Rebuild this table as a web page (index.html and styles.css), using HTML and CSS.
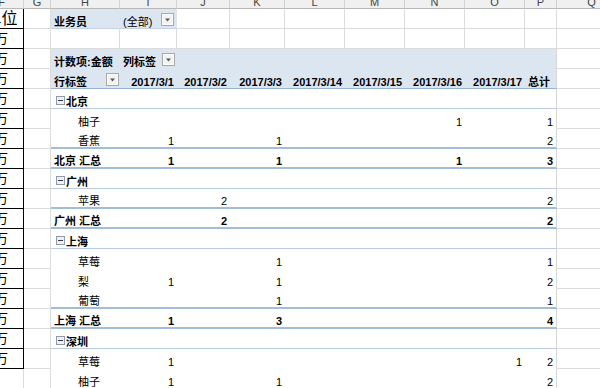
FILE: index.html
```html
<!DOCTYPE html>
<html lang="zh">
<head>
<meta charset="utf-8">
<title>数据透视表</title>
<link rel="stylesheet" href="styles.css">
</head>
<body>
<div class="sheet">
  <div class="row hd">
    <div class="h">F</div><div class="h">G</div><div class="h">H</div><div class="h">I</div><div class="h">J</div><div class="h">K</div><div class="h">L</div><div class="h">M</div><div class="h">N</div><div class="h">O</div><div class="h">P</div><div class="h">Q</div>
  </div>

  <div class="row">
    <div class="c f top">单位</div><div class="c"></div>
    <div class="c fl b">业务员</div>
    <div class="c fl sp">(全部)<svg class="dd" width="13" height="13" viewBox="0 0 13 13"><rect x="0.5" y="0.5" width="12" height="12" fill="#f3f3f3" stroke="#a8a8a8"/><rect x="1.5" y="1.5" width="10" height="10" fill="none" stroke="#fdfdfd"/><path d="M4 5.5h5l-2.5 3z" fill="#595959"/></svg></div>
    <div class="c"></div><div class="c"></div><div class="c"></div><div class="c"></div><div class="c"></div><div class="c"></div><div class="c"></div>
    <div class="c"></div>
  </div>

  <div class="row">
    <div class="c f">万</div><div class="c"></div>
    <div class="c"></div><div class="c"></div><div class="c"></div><div class="c"></div><div class="c"></div><div class="c"></div><div class="c"></div><div class="c"></div><div class="c"></div>
    <div class="c"></div>
  </div>

  <div class="row">
    <div class="c f">万</div><div class="c"></div>
    <div class="c ph b">计数项:金额</div>
    <div class="c ph b sp">列标签<svg class="dd" width="13" height="13" viewBox="0 0 13 13"><rect x="0.5" y="0.5" width="12" height="12" fill="#f3f3f3" stroke="#a8a8a8"/><rect x="1.5" y="1.5" width="10" height="10" fill="none" stroke="#fdfdfd"/><path d="M4 5.5h5l-2.5 3z" fill="#595959"/></svg></div>
    <div class="c ph"></div><div class="c ph"></div><div class="c ph"></div><div class="c ph"></div><div class="c ph"></div><div class="c ph"></div><div class="c ph pl"></div>
    <div class="c"></div>
  </div>

  <div class="row ln-hd">
    <div class="c f">万</div><div class="c"></div>
    <div class="c ph b sp sp1">行标签<svg class="dd" width="13" height="13" viewBox="0 0 13 13"><rect x="0.5" y="0.5" width="12" height="12" fill="#f3f3f3" stroke="#a8a8a8"/><rect x="1.5" y="1.5" width="10" height="10" fill="none" stroke="#fdfdfd"/><path d="M4 5.5h5l-2.5 3z" fill="#595959"/></svg></div>
    <div class="c ph b n">2017/3/1</div><div class="c ph b n">2017/3/2</div><div class="c ph b n">2017/3/3</div><div class="c ph b n">2017/3/14</div><div class="c ph b n">2017/3/15</div><div class="c ph b n">2017/3/16</div><div class="c ph b n">2017/3/17</div>
    <div class="c ph b pl">总计</div>
    <div class="c"></div>
  </div>

  <div class="row ln-g">
    <div class="c f">万</div><div class="c"></div>
    <div class="c pb b"><svg class="tg" width="9" height="9" viewBox="0 0 9 9"><rect x="0.5" y="0.5" width="8" height="8" fill="#eef1f4" stroke="#8f9baa"/><path d="M2 4.5h5" stroke="#3a3a3a"/></svg>北京</div>
    <div class="c pb"></div><div class="c pb"></div><div class="c pb"></div><div class="c pb"></div><div class="c pb"></div><div class="c pb"></div><div class="c pb"></div>
    <div class="c pb pl"></div>
    <div class="c"></div>
  </div>

  <div class="row">
    <div class="c f">万</div><div class="c"></div>
    <div class="c pb ch">柚子</div>
    <div class="c pb"></div><div class="c pb"></div><div class="c pb"></div><div class="c pb"></div><div class="c pb"></div><div class="c pb n">1</div><div class="c pb"></div>
    <div class="c pb pl n">1</div>
    <div class="c"></div>
  </div>

  <div class="row ln-s">
    <div class="c f">万</div><div class="c"></div>
    <div class="c pb ch">香蕉</div>
    <div class="c pb n">1</div><div class="c pb"></div><div class="c pb n">1</div><div class="c pb"></div><div class="c pb"></div><div class="c pb"></div><div class="c pb"></div>
    <div class="c pb pl n">2</div>
    <div class="c"></div>
  </div>

  <div class="row ln-s">
    <div class="c f">万</div><div class="c"></div>
    <div class="c pb b">北京 汇总</div>
    <div class="c pb n b">1</div><div class="c pb"></div><div class="c pb n b">1</div><div class="c pb"></div><div class="c pb"></div><div class="c pb n b">1</div><div class="c pb"></div>
    <div class="c pb pl n b">3</div>
    <div class="c"></div>
  </div>

  <div class="row ln-g">
    <div class="c f">万</div><div class="c"></div>
    <div class="c pb b"><svg class="tg" width="9" height="9" viewBox="0 0 9 9"><rect x="0.5" y="0.5" width="8" height="8" fill="#eef1f4" stroke="#8f9baa"/><path d="M2 4.5h5" stroke="#3a3a3a"/></svg>广州</div>
    <div class="c pb"></div><div class="c pb"></div><div class="c pb"></div><div class="c pb"></div><div class="c pb"></div><div class="c pb"></div><div class="c pb"></div>
    <div class="c pb pl"></div>
    <div class="c"></div>
  </div>

  <div class="row ln-s">
    <div class="c f">万</div><div class="c"></div>
    <div class="c pb ch">苹果</div>
    <div class="c pb"></div><div class="c pb n">2</div><div class="c pb"></div><div class="c pb"></div><div class="c pb"></div><div class="c pb"></div><div class="c pb"></div>
    <div class="c pb pl n">2</div>
    <div class="c"></div>
  </div>

  <div class="row ln-s">
    <div class="c f">万</div><div class="c"></div>
    <div class="c pb b">广州 汇总</div>
    <div class="c pb"></div><div class="c pb n b">2</div><div class="c pb"></div><div class="c pb"></div><div class="c pb"></div><div class="c pb"></div><div class="c pb"></div>
    <div class="c pb pl n b">2</div>
    <div class="c"></div>
  </div>

  <div class="row ln-g">
    <div class="c f">万</div><div class="c"></div>
    <div class="c pb b"><svg class="tg" width="9" height="9" viewBox="0 0 9 9"><rect x="0.5" y="0.5" width="8" height="8" fill="#eef1f4" stroke="#8f9baa"/><path d="M2 4.5h5" stroke="#3a3a3a"/></svg>上海</div>
    <div class="c pb"></div><div class="c pb"></div><div class="c pb"></div><div class="c pb"></div><div class="c pb"></div><div class="c pb"></div><div class="c pb"></div>
    <div class="c pb pl"></div>
    <div class="c"></div>
  </div>

  <div class="row">
    <div class="c f">万</div><div class="c"></div>
    <div class="c pb ch">草莓</div>
    <div class="c pb"></div><div class="c pb"></div><div class="c pb n">1</div><div class="c pb"></div><div class="c pb"></div><div class="c pb"></div><div class="c pb"></div>
    <div class="c pb pl n">1</div>
    <div class="c"></div>
  </div>

  <div class="row">
    <div class="c f">万</div><div class="c"></div>
    <div class="c pb ch">梨</div>
    <div class="c pb n">1</div><div class="c pb"></div><div class="c pb n">1</div><div class="c pb"></div><div class="c pb"></div><div class="c pb"></div><div class="c pb"></div>
    <div class="c pb pl n">2</div>
    <div class="c"></div>
  </div>

  <div class="row ln-s">
    <div class="c f">万</div><div class="c"></div>
    <div class="c pb ch">葡萄</div>
    <div class="c pb"></div><div class="c pb"></div><div class="c pb n">1</div><div class="c pb"></div><div class="c pb"></div><div class="c pb"></div><div class="c pb"></div>
    <div class="c pb pl n">1</div>
    <div class="c"></div>
  </div>

  <div class="row ln-s">
    <div class="c f">万</div><div class="c"></div>
    <div class="c pb b">上海 汇总</div>
    <div class="c pb n b">1</div><div class="c pb"></div><div class="c pb n b">3</div><div class="c pb"></div><div class="c pb"></div><div class="c pb"></div><div class="c pb"></div>
    <div class="c pb pl n b">4</div>
    <div class="c"></div>
  </div>

  <div class="row ln-g">
    <div class="c f">万</div><div class="c"></div>
    <div class="c pb b"><svg class="tg" width="9" height="9" viewBox="0 0 9 9"><rect x="0.5" y="0.5" width="8" height="8" fill="#eef1f4" stroke="#8f9baa"/><path d="M2 4.5h5" stroke="#3a3a3a"/></svg>深圳</div>
    <div class="c pb"></div><div class="c pb"></div><div class="c pb"></div><div class="c pb"></div><div class="c pb"></div><div class="c pb"></div><div class="c pb"></div>
    <div class="c pb pl"></div>
    <div class="c"></div>
  </div>

  <div class="row">
    <div class="c f">万</div><div class="c"></div>
    <div class="c pb ch">草莓</div>
    <div class="c pb n">1</div><div class="c pb"></div><div class="c pb"></div><div class="c pb"></div><div class="c pb"></div><div class="c pb"></div><div class="c pb n">1</div>
    <div class="c pb pl n">2</div>
    <div class="c"></div>
  </div>

  <div class="row">
    <div class="c"></div><div class="c"></div>
    <div class="c pb ch">柚子</div>
    <div class="c pb n">1</div><div class="c pb"></div><div class="c pb n">1</div><div class="c pb"></div><div class="c pb"></div><div class="c pb"></div><div class="c pb"></div>
    <div class="c pb pl n">2</div>
    <div class="c"></div>
  </div>
</div>
</body>
</html>
```

FILE: styles.css
```css
* { box-sizing: border-box; }
html, body {
  margin: 0;
  padding: 0;
  background: #fff;
  overflow: hidden;
}
body {
  width: 600px;
  height: 388px;
  font-family: "Liberation Sans", "Noto Sans CJK SC", sans-serif;
  font-size: 11px;
  color: #000;
}
.sheet {
  margin-left: -20px;
  width: 647px;
}
.row {
  display: grid;
  grid-template-columns: 44px 27px 69px 57px 53px 55px 60px 60px 60px 60px 32px 70px;
  height: 20px;
}
.hd {
  height: 9px;
  background: #f0f0f0;
}
.h {
  border-right: 1px solid #d2d2d2;
  border-bottom: 1px solid #b8b8b8;
  display: flex;
  justify-content: center;
  align-items: flex-end;
  overflow: hidden;
  font-size: 11px;
  line-height: 11px;
  color: #444;
}
.c {
  border-right: 1px solid #dadcdd;
  border-bottom: 1px solid #dadcdd;
  display: flex;
  align-items: flex-end;
  padding: 0 3px;
  line-height: 11px;
  white-space: nowrap;
}
.f {
  border-right-color: #000;
  border-bottom-color: #000;
  justify-content: center;
  align-items: center;
  padding: 0;
  font-size: 13px;
  line-height: 16px;
}
.f.top { font-size: 16px; }
.fl {
  background: #dce6f1;
  border-right-color: #dce6f1;
  border-bottom-color: #c3d2e4;
}
.ph {
  background: #dce6f1;
  border-right: none;
  border-bottom: 1px solid #dce6f1;
}
.pb {
  border-right: none;
  border-bottom: 1px solid #fff;
}
.row .pl { border-right: 1px solid #d6d6d6; }
.b { font-weight: bold; }
.n { justify-content: flex-end; }
.sp { justify-content: space-between; padding-right: 2px; }
.sp1 { padding-right: 1px; }
.ch { padding-left: 27px; }
.dd { flex: none; display: block; margin-bottom: 2px; }
.tg { flex: none; display: block; margin: 0 1px 3px 2px; }
.ln-hd .ph { border-bottom: 1px solid #95b3d7; }
.ln-g .pb { border-bottom: 1px solid #b8cce4; }
.ln-s .pb { border-bottom: 2px solid #a2bcdc; }
```
